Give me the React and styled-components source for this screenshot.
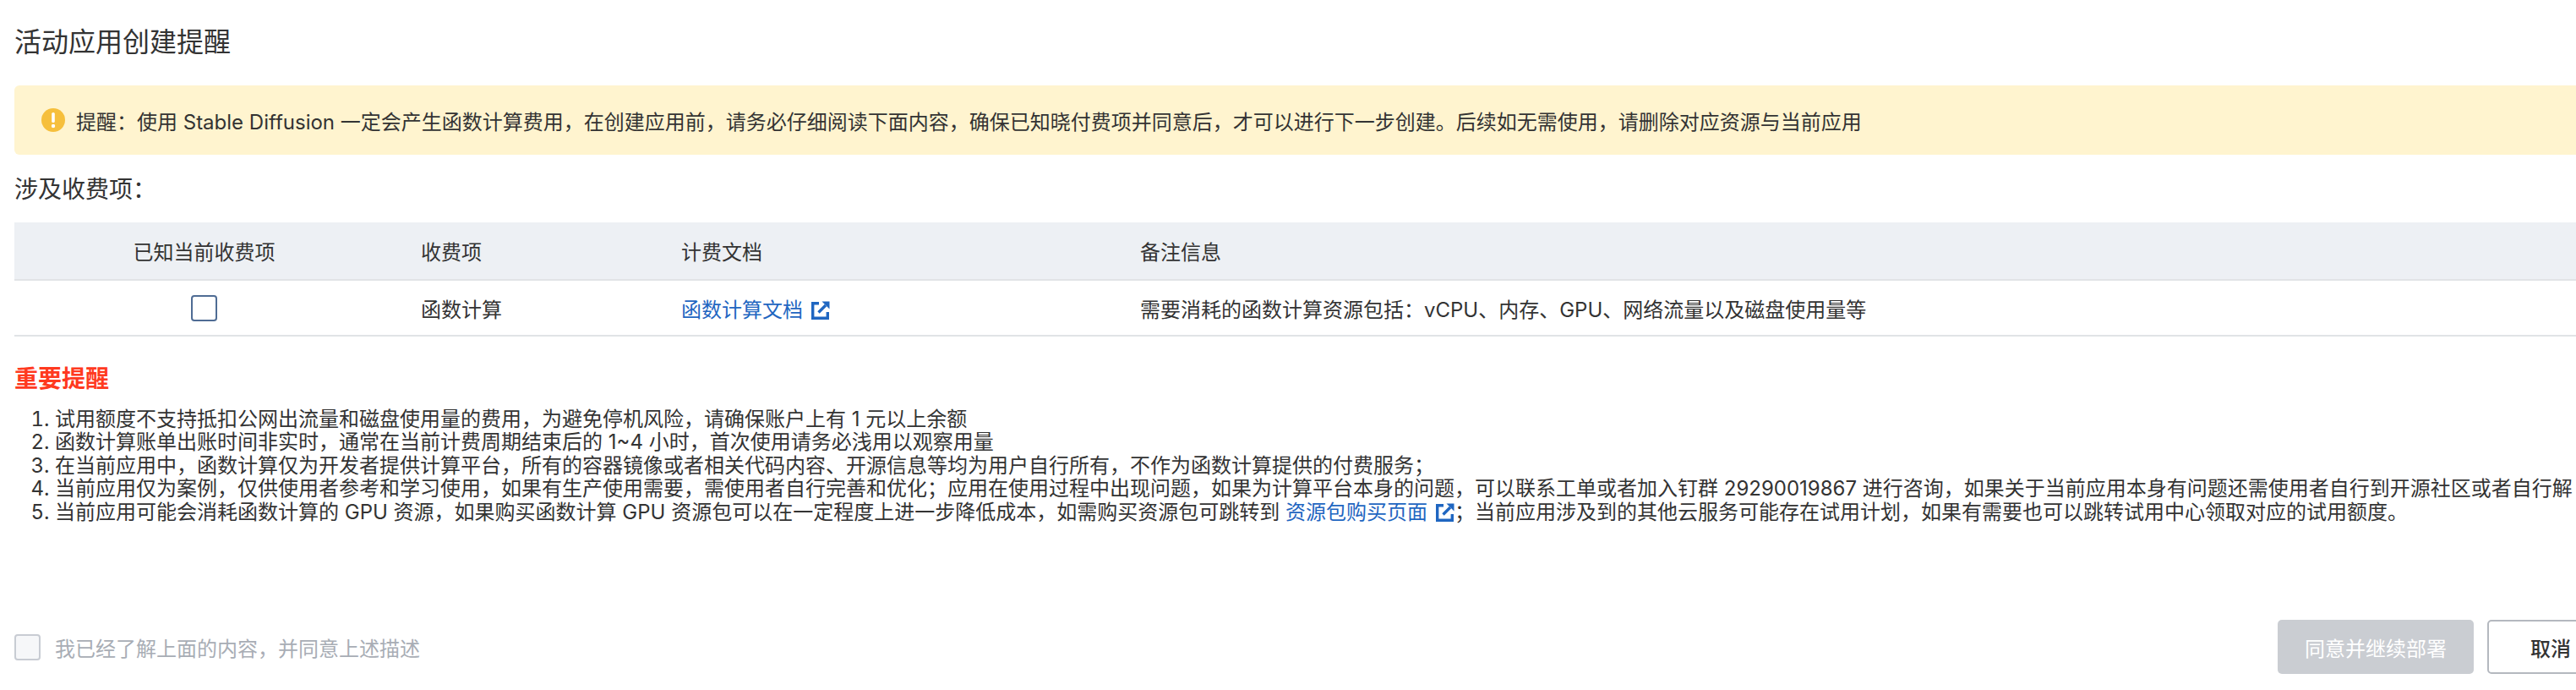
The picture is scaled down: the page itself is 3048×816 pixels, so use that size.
import styled, { createGlobalStyle } from "styled-components";

const GlobalStyle = createGlobalStyle`
  html, body {
    margin: 0;
    height: 816px;
    overflow: hidden;
    background: #fff;
  }
  body {
    font-family: "Inter", "Noto Sans CJK SC", sans-serif;
    color: #333;
  }
`;

const Page = styled.div`
  display: flex;
  flex-direction: column;
  box-sizing: border-box;
  width: 3093px;
  height: 816px;
  padding: 0 0 19px 17px;
`;

const Title = styled.h1`
  margin: 0;
  height: 101px;
  display: flex;
  align-items: center;
  font-size: 32px;
  font-weight: 400;
  line-height: 40px;
  color: #333;
  padding-bottom: 2px;
  box-sizing: border-box;
`;

const Alert = styled.div`
  display: flex;
  align-items: center;
  gap: 13px;
  height: 82px;
  padding-left: 32px;
  background: #fff4cf;
  border-radius: 6px 0 0 6px;
  font-size: 24px;
  white-space: nowrap;
`;

const SectionLabel = styled.div`
  margin: 21px 0 19px;
  font-size: 28px;
  line-height: 40px;
`;

const Row = styled.div`
  display: grid;
  grid-template-columns: 449px 308px 543px 1fr;
  align-items: center;
  box-sizing: border-box;
  height: ${(p) => p.$height}px;
  background: ${(p) => p.$bg || "#fff"};
  border-bottom: 2px solid #e1e3e6;
  font-size: 24px;
`;

const Cell = styled.div`
  padding-left: 32px;
  white-space: nowrap;
`;

const CheckCell = styled.div`
  display: flex;
  justify-content: center;
`;

const Checkbox = styled.span`
  display: block;
  box-sizing: border-box;
  flex: none;
  width: 31px;
  height: 31px;
  border-radius: 4px;
  border: 2px solid ${(p) => (p.$disabled ? "#c8ccd3" : "#4f6c94")};
  background: ${(p) => (p.$disabled ? "#f6f7f9" : "#fff")};
`;

const DocLink = styled.a`
  color: #1f66c1;
  text-decoration: none;
`;

const ExternalIcon = styled.svg`
  width: 22px;
  height: 22px;
  margin-left: 10px;
  vertical-align: -3px;
`;

const Important = styled.div`
  margin: 30px 0 14px;
  font-size: 28px;
  font-weight: 600;
  line-height: 40px;
  color: #ff3a1f;
`;

const Notes = styled.ol`
  margin: 0;
  padding: 0 0 0 48px;
  font-size: 24px;
  line-height: 27.4px;
  white-space: nowrap;
`;

const Footer = styled.div`
  margin-top: auto;
  display: flex;
  align-items: center;
`;

const Agree = styled.label`
  display: flex;
  align-items: center;
  gap: 17px;
  font-size: 24px;
  color: #a8adb5;
`;

const Actions = styled.div`
  margin-left: auto;
  display: flex;
  gap: 16px;
`;

const Button = styled.button`
  box-sizing: border-box;
  height: 64px;
  width: ${(p) => p.$width}px;
  padding: 0;
  border-radius: 5px;
  font: inherit;
  font-size: 24px;
  font-weight: ${(p) => (p.$primary ? 400 : 500)};
  color: ${(p) => (p.$primary ? "#fff" : "#333")};
  background: ${(p) => (p.$primary ? "#cacdd2" : "#fff")};
  border: ${(p) => (p.$primary ? "none" : "2px solid #b4b8bf")};
`;

function WarnIcon() {
  return (
    <svg width="28" height="28" viewBox="0 0 28 28" style={{ flex: "none" }}>
      <circle cx="14" cy="14" r="14" fill="#f6bf3c" />
      <rect x="12.2" y="5" width="3.6" height="12" rx="1.6" fill="#fff" />
      <circle cx="14" cy="21" r="2.2" fill="#fff" />
    </svg>
  );
}

function LinkIcon() {
  return (
    <ExternalIcon viewBox="0 0 22 22" fill="none" stroke="#1f66c1" strokeWidth="3.4">
      <path d="M9 2.7H1.7v17.6h17.6V13" />
      <path d="M8.5 13.5 17 5" />
      <path d="M12.5 0.5h9v9z" fill="#1f66c1" stroke="none" />
    </ExternalIcon>
  );
}

export default function App() {
  return (
    <Page>
      <GlobalStyle />
      <Title>活动应用创建提醒</Title>
      <Alert>
        <WarnIcon />
        <span>
          提醒&#xFF1A;使用 Stable Diffusion 一定会产生函数计算费用&#xFF0C;在创建应用前&#xFF0C;请务必仔细阅读下面内容&#xFF0C;确保已知晓付费项并同意后&#xFF0C;才可以进行下一步创建。后续如无需使用&#xFF0C;请删除对应资源与当前应用
        </span>
      </Alert>
      <SectionLabel>涉及收费项&#xFF1A;</SectionLabel>
      <Row $height={69} $bg="#edf0f4">
        <CheckCell>已知当前收费项</CheckCell>
        <Cell>收费项</Cell>
        <Cell>计费文档</Cell>
        <Cell>备注信息</Cell>
      </Row>
      <Row $height={66}>
        <CheckCell>
          <Checkbox />
        </CheckCell>
        <Cell>函数计算</Cell>
        <Cell>
          <DocLink href="#">
            函数计算文档
            <LinkIcon />
          </DocLink>
        </Cell>
        <Cell>需要消耗的函数计算资源包括&#xFF1A;vCPU、内存、GPU、网络流量以及磁盘使用量等</Cell>
      </Row>
      <Important>重要提醒</Important>
      <Notes>
        <li>试用额度不支持抵扣公网出流量和磁盘使用量的费用&#xFF0C;为避免停机风险&#xFF0C;请确保账户上有 1 元以上余额</li>
        <li>函数计算账单出账时间非实时&#xFF0C;通常在当前计费周期结束后的 1~4 小时&#xFF0C;首次使用请务必浅用以观察用量</li>
        <li>在当前应用中&#xFF0C;函数计算仅为开发者提供计算平台&#xFF0C;所有的容器镜像或者相关代码内容、开源信息等均为用户自行所有&#xFF0C;不作为函数计算提供的付费服务&#xFF1B;</li>
        <li>当前应用仅为案例&#xFF0C;仅供使用者参考和学习使用&#xFF0C;如果有生产使用需要&#xFF0C;需使用者自行完善和优化&#xFF1B;应用在使用过程中出现问题&#xFF0C;如果为计算平台本身的问题&#xFF0C;可以联系工单或者加入钉群 29290019867 进行咨询&#xFF0C;如果关于当前应用本身有问题还需使用者自行到开源社区或者自行解</li>
        <li>
          当前应用可能会消耗函数计算的 GPU 资源&#xFF0C;如果购买函数计算 GPU 资源包可以在一定程度上进一步降低成本&#xFF0C;如需购买资源包可跳转到 <DocLink href="#">资源包购买页面<LinkIcon /></DocLink>&#xFF1B;当前应用涉及到的其他云服务可能存在试用计划&#xFF0C;如果有需要也可以跳转试用中心领取对应的试用额度。
        </li>
      </Notes>
      <Footer>
        <Agree>
          <Checkbox $disabled />
          我已经了解上面的内容&#xFF0C;并同意上述描述
        </Agree>
        <Actions>
          <Button $primary $width={232}>同意并继续部署</Button>
          <Button $width={150}>取消</Button>
        </Actions>
      </Footer>
    </Page>
  );
}
